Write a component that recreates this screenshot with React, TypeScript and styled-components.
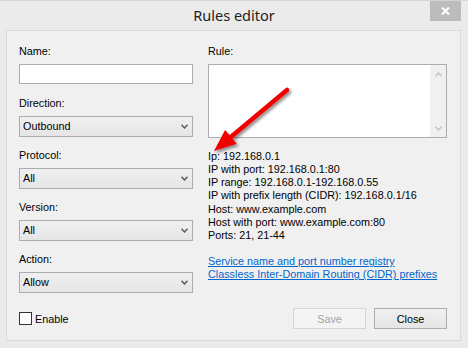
import React from "react";
import styled, { createGlobalStyle } from "styled-components";

const GlobalStyle = createGlobalStyle`
  html, body { margin: 0; padding: 0; background: #ebebeb; }
  * { box-sizing: border-box; }
`;

const UI_FONT = `"Liberation Sans", Arial, sans-serif`;

const Window = styled.div`
  position: relative;
  width: 468px;
  height: 348px;
  background: #ebebeb;
  border-top: 1px solid #d4d4d4;
  display: flex;
  flex-direction: column;
  font-family: ${UI_FONT};
  font-size: 10.8px;
  color: #000;
`;

const TitleBar = styled.div`
  height: 29px;
  display: grid;
  grid-template-columns: 1fr auto 1fr;
  align-items: start;
`;

const Title = styled.div`
  grid-column: 2;
  font-family: "Noto Sans", "Open Sans", sans-serif;
  font-size: 14.5px;
  line-height: 29px;
  height: 29px;
  color: #1e1e1e;
`;

const CloseButton = styled.div`
  grid-column: 3;
  justify-self: end;
  margin-right: 7px;
  width: 31px;
  height: 20px;
  background: #bcbcbc;
  display: flex;
  align-items: center;
  justify-content: center;
`;

const Client = styled.div`
  margin: 0 7px 0 6px;
  height: 311px;
  border: 1px solid #dadada;
  background: #f0f0f0;
  padding: 13px 13px 11px 12px;
  display: grid;
  grid-template-columns: 174px 239px;
  grid-template-rows: 1fr auto;
  column-gap: 15px;
`;

const Column = styled.div`
  display: flex;
  flex-direction: column;
`;

const Field = styled.div`
  height: 52px;
  display: flex;
  flex-direction: column;
`;

const Label = styled.div`
  line-height: 13px;
  height: 14px;
  padding-top: 1px;
  margin-bottom: 6px;
`;

const TextBox = styled.div`
  height: 20px;
  background: #fff;
  border: 1px solid #abadb3;
`;

const Select = styled.div`
  height: 21px;
  border: 1px solid #acacac;
  background: linear-gradient(#f0f0f0, #e5e5e5);
  display: flex;
  align-items: center;
  justify-content: space-between;
  padding: 0 4px 0 3px;
  line-height: 13px;
`;

const RuleBox = styled.div`
  height: 74px;
  background: #fff;
  border: 1px solid #abadb3;
  display: flex;
  justify-content: flex-end;
`;

const ScrollBar = styled.div`
  width: 16px;
  background: #f0f0f0;
  display: flex;
  flex-direction: column;
  justify-content: space-between;
  align-items: center;
  padding: 7px 0 6px;
`;

const Info = styled.div`
  margin-top: 12px;
  line-height: 13.15px;
`;

const InfoLine = styled.div`
  white-space: pre;
`;

const LinkGroup = styled.div`
  margin-top: 13.15px;
`;

const Link = styled.a`
  color: #0066cc;
  text-decoration: underline;
  display: block;
  width: max-content;
`;

const Footer = styled.div<{ $end?: boolean }>`
  display: flex;
  align-items: center;
  justify-content: ${(p) => (p.$end ? "flex-end" : "flex-start")};
  gap: ${(p) => (p.$end ? "8px" : "3px")};
  height: 21px;
`;

const CheckBox = styled.div`
  width: 13px;
  height: 13px;
  background: #fff;
  border: 1px solid #333;
`;

const Button = styled.div<{ $disabled?: boolean }>`
  width: 73px;
  height: 21px;
  display: flex;
  align-items: center;
  justify-content: center;
  border: 1px solid ${(p) => (p.$disabled ? "#d5d5d5" : "#adadad")};
  background: ${(p) => (p.$disabled ? "#f4f4f4" : "linear-gradient(#f0f0f0, #e5e5e5)")};
  color: ${(p) => (p.$disabled ? "#a3a3a3" : "#000")};
`;

const ArrowOverlay = styled.svg`
  position: absolute;
  left: 0;
  top: 0;
  pointer-events: none;
`;

const Chevron = ({ up, color }: { up?: boolean; color: string }) => (
  <svg width="7" height="5" viewBox="0 0 7 5">
    <path
      d={up ? "M0.5 4.2 L3.5 1 L6.5 4.2" : "M0.5 0.8 L3.5 4 L6.5 0.8"}
      fill="none"
      stroke={color}
      strokeWidth="1.5"
    />
  </svg>
);

const Combo = ({ label, value }: { label: string; value: string }) => (
  <Field>
    <Label>{label}</Label>
    <Select>
      <span>{value}</span>
      <Chevron color="#5a5a5a" />
    </Select>
  </Field>
);

const infoLines = [
  "Ip: 192.168.0.1",
  "IP with port: 192.168.0.1:80",
  "IP range: 192.168.0.1-192.168.0.55",
  "IP with prefix length (CIDR): 192.168.0.1/16",
  "Host: www.example.com",
  "Host with port: www.example.com:80",
  "Ports: 21, 21-44",
];

export default function App() {
  // arrow geometry
  const tip = { x: 214, y: 150 };
  const start = { x: 287, y: 89 };
  const dx = tip.x - start.x;
  const dy = tip.y - start.y;
  const len = Math.hypot(dx, dy);
  const ux = dx / len;
  const uy = dy / len;
  const px = -uy;
  const py = ux;
  const headLen = 22;
  const halfW = 9;
  const bx = tip.x - ux * headLen;
  const by = tip.y - uy * headLen;
  const w1 = `${bx + px * halfW},${by + py * halfW}`;
  const w2 = `${bx - px * halfW},${by - py * halfW}`;

  return (
    <>
      <GlobalStyle />
      <Window>
        <TitleBar>
          <Title>Rules editor</Title>
          <CloseButton>
            <svg width="9" height="8" viewBox="0 0 9 8">
              <path d="M1 0.5 L8 7.5 M8 0.5 L1 7.5" stroke="#fff" strokeWidth="2" />
            </svg>
          </CloseButton>
        </TitleBar>
        <Client>
          <Column>
            <Field>
              <Label>Name:</Label>
              <TextBox />
            </Field>
            <Combo label="Direction:" value="Outbound" />
            <Combo label="Protocol:" value="All" />
            <Combo label="Version:" value="All" />
            <Combo label="Action:" value="Allow" />
          </Column>
          <Column>
            <Label>Rule:</Label>
            <RuleBox>
              <ScrollBar>
                <Chevron up color="#c2c2c2" />
                <Chevron color="#c2c2c2" />
              </ScrollBar>
            </RuleBox>
            <Info>
              {infoLines.map((l) => (
                <InfoLine key={l}>{l}</InfoLine>
              ))}
              <LinkGroup>
                <Link>Service name and port number registry</Link>
                <Link>Classless Inter-Domain Routing (CIDR) prefixes</Link>
              </LinkGroup>
            </Info>
          </Column>
          <Footer>
            <CheckBox />
            <span>Enable</span>
          </Footer>
          <Footer $end>
            <Button $disabled>Save</Button>
            <Button>Close</Button>
          </Footer>
        </Client>
        <ArrowOverlay width="468" height="348" viewBox="0 0 468 348">
          <defs>
            <filter id="sh" x="-20%" y="-20%" width="140%" height="140%">
              <feDropShadow dx="2" dy="2" stdDeviation="1.8" floodColor="#000" floodOpacity="0.45" />
            </filter>
          </defs>
          <g filter="url(#sh)">
            <line
              x1={start.x}
              y1={start.y}
              x2={bx + ux * 2}
              y2={by + uy * 2}
              stroke="#f20000"
              strokeWidth="4.5"
              strokeLinecap="round"
            />
            <polygon points={`${tip.x},${tip.y} ${w1} ${w2}`} fill="#f20000" />
          </g>
        </ArrowOverlay>
      </Window>
    </>
  );
}
